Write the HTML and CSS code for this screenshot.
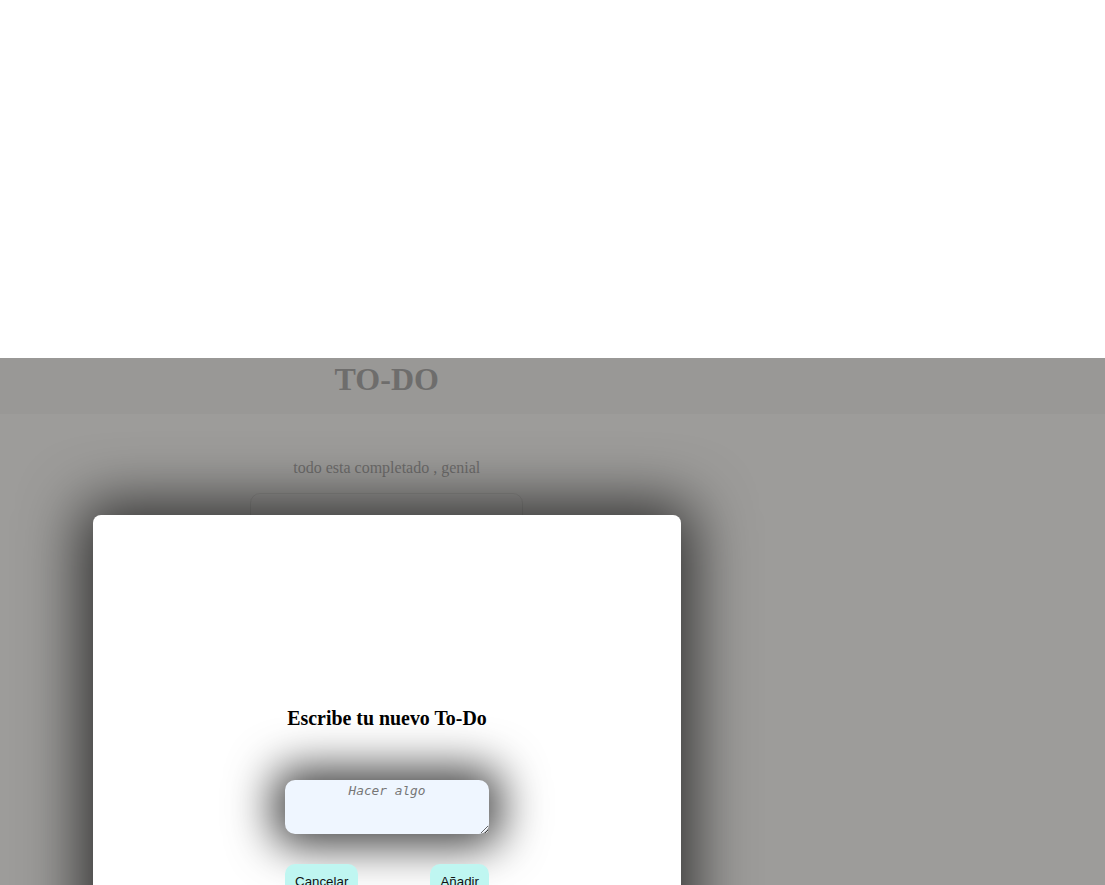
FILE: index.html
```html
<!DOCTYPE html>
<html lang="es">
<head>
<meta charset="utf-8">
<title>TO-DO</title>
<link rel="stylesheet" href="styles.css">
</head>
<body>
<div class="top-space"></div>
<div class="app">
  <header class="app-header">
    <div class="container">
      <h1 class="app-title">TO-DO</h1>
    </div>
  </header>
  <main class="container main">
    <p class="status">todo esta completado , genial</p>
    <div class="list-card"></div>
  </main>
  <div class="modal">
    <h2 class="modal-title">Escribe tu nuevo To-Do</h2>
    <textarea class="todo-input" placeholder="Hacer algo"></textarea>
    <div class="actions">
      <button class="btn" type="button">Cancelar</button>
      <button class="btn" type="button">Añadir</button>
    </div>
  </div>
</div>
</body>
</html>
```
FILE: styles.css
```css
html, body {
  margin: 0;
  padding: 0;
  background: #ffffff;
  font-family: "Liberation Serif", "Times New Roman", serif;
}

.top-space {
  height: 358px;
}

.app {
  position: relative;
  height: 527px;
  overflow: hidden;
  background: #9d9c9a;
}

.container {
  width: 70%;
}

.app-header {
  height: 56px;
  background: #999896;
}

.app-title {
  margin: 0;
  padding-top: 3px;
  font-size: 32px;
  line-height: 37px;
  font-weight: bold;
  text-align: center;
  color: #6e6d6c;
}

.main {
  display: flex;
  flex-direction: column;
  align-items: center;
  padding-top: 45px;
}

.status {
  margin: 0;
  font-size: 16px;
  line-height: 18px;
  color: #6e6d6c;
}

.list-card {
  margin-top: 16px;
  width: 273px;
  height: 200px;
  box-sizing: border-box;
  border: 1px solid rgba(0, 0, 0, 0.07);
  border-radius: 10px;
}

.modal {
  position: absolute;
  left: 93px;
  top: 157px;
  width: 588px;
  height: 560px;
  box-sizing: border-box;
  background: #ffffff;
  border-radius: 8px;
  box-shadow: 0 0 60px 12px rgba(0, 0, 0, 0.7);
  display: flex;
  flex-direction: column;
  align-items: center;
  padding-top: 192px;
}

.modal-title {
  margin: 0;
  font-size: 19.9px;
  line-height: 23px;
  font-weight: bold;
  color: #000000;
}

.todo-input {
  margin-top: 50px;
  width: 204px;
  height: 54px;
  box-sizing: border-box;
  border: none;
  border-radius: 10px;
  padding: 3px 6px;
  background: #eff6ff;
  box-shadow: 0 0 45px 12px rgba(0, 0, 0, 0.75);
  font-family: "DejaVu Sans Mono", "Liberation Mono", monospace;
  font-size: 12.8px;
  text-align: center;
  outline: none;
}

.todo-input::placeholder {
  font-style: italic;
  color: #777777;
}

.actions {
  margin-top: 30px;
  width: 204px;
  display: flex;
  justify-content: space-between;
}

.btn {
  border: none;
  border-radius: 10px;
  padding: 10px 10px 9px;
  background: #bff6f1;
  font-family: "Liberation Sans", Arial, sans-serif;
  font-size: 13.33px;
  color: #111111;
}
```
